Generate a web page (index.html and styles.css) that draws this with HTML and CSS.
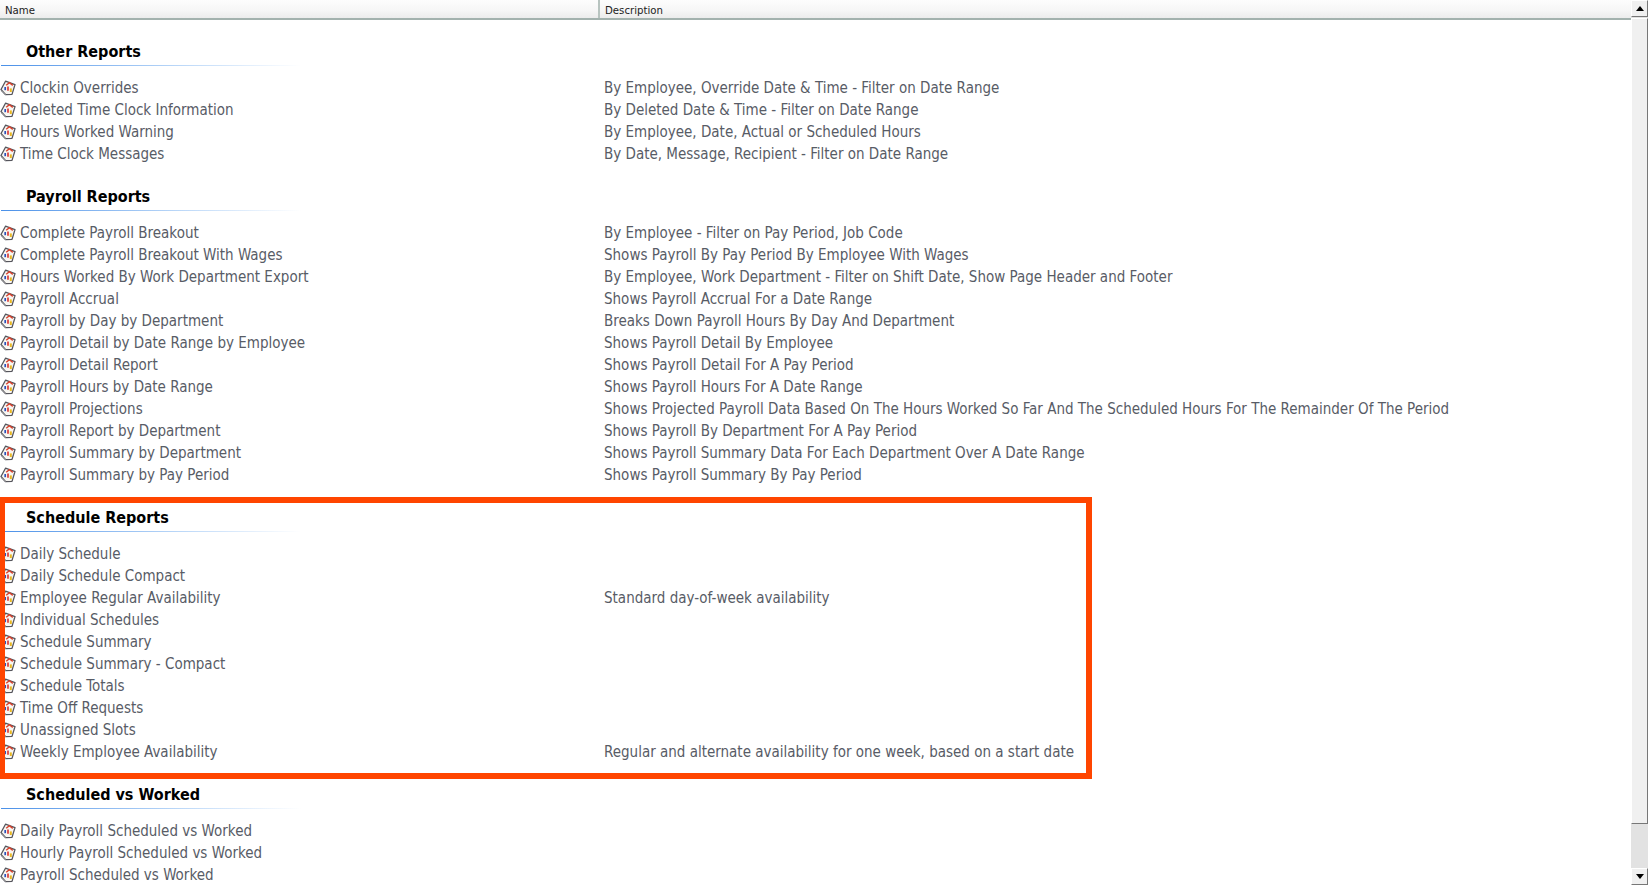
FILE: index.html
```html
<!DOCTYPE html>
<html lang="en">
<head>
<meta charset="utf-8">
<title>Reports</title>
<link rel="stylesheet" href="styles.css">
</head>
<body>
<svg class="defs" width="0" height="0" aria-hidden="true">
  <symbol id="rep" viewBox="0 0 16 17">
    <path d="M1 10.5 5.5 2.2l9.5 3.4-3 9.8-6.4.2Z" fill="#f8f6f2" stroke="#55555c" stroke-width="1.3" stroke-linejoin="round"/>
    <path d="M1.4 11.6 5.6 15.8" stroke="#8e8e92" stroke-width="1.3"/>
    <path d="M6.2 6.2 9.4 3.6l3.4 2.8" fill="none" stroke="#d8402c" stroke-width="1.4"/>
    <path d="M5.2 8v3.2" stroke="#2c50b8" stroke-width="1.7"/>
    <path d="M8 7.4v4.4" stroke="#d8302c" stroke-width="1.6"/>
    <path d="M10.8 9.4v3.6" stroke="#e8b820" stroke-width="2"/>
  </symbol>
</svg>
<div class="window">
  <div class="content">
    <header class="head">
      <div class="head-name">Name</div>
      <div class="head-desc">Description</div>
    </header>
    <main class="list">
      <section class="group">
        <h2 class="group-title">Other Reports</h2>
        <div class="row"><svg class="ico"><use href="#rep"/></svg><span class="name">Clockin Overrides</span><span class="desc">By Employee, Override Date &amp; Time - Filter on Date Range</span></div>
        <div class="row"><svg class="ico"><use href="#rep"/></svg><span class="name">Deleted Time Clock Information</span><span class="desc">By Deleted Date &amp; Time - Filter on Date Range</span></div>
        <div class="row"><svg class="ico"><use href="#rep"/></svg><span class="name">Hours Worked Warning</span><span class="desc">By Employee, Date, Actual or Scheduled Hours</span></div>
        <div class="row"><svg class="ico"><use href="#rep"/></svg><span class="name">Time Clock Messages</span><span class="desc">By Date, Message, Recipient - Filter on Date Range</span></div>
      </section>
      <section class="group">
        <h2 class="group-title">Payroll Reports</h2>
        <div class="row"><svg class="ico"><use href="#rep"/></svg><span class="name">Complete Payroll Breakout</span><span class="desc">By Employee - Filter on Pay Period, Job Code</span></div>
        <div class="row"><svg class="ico"><use href="#rep"/></svg><span class="name">Complete Payroll Breakout With Wages</span><span class="desc">Shows Payroll By Pay Period By Employee With Wages</span></div>
        <div class="row"><svg class="ico"><use href="#rep"/></svg><span class="name">Hours Worked By Work Department Export</span><span class="desc">By Employee, Work Department - Filter on Shift Date, Show Page Header and Footer</span></div>
        <div class="row"><svg class="ico"><use href="#rep"/></svg><span class="name">Payroll Accrual</span><span class="desc">Shows Payroll Accrual For a Date Range</span></div>
        <div class="row"><svg class="ico"><use href="#rep"/></svg><span class="name">Payroll by Day by Department</span><span class="desc">Breaks Down Payroll Hours By Day And Department</span></div>
        <div class="row"><svg class="ico"><use href="#rep"/></svg><span class="name">Payroll Detail by Date Range by Employee</span><span class="desc">Shows Payroll Detail By Employee</span></div>
        <div class="row"><svg class="ico"><use href="#rep"/></svg><span class="name">Payroll Detail Report</span><span class="desc">Shows Payroll Detail For A Pay Period</span></div>
        <div class="row"><svg class="ico"><use href="#rep"/></svg><span class="name">Payroll Hours by Date Range</span><span class="desc">Shows Payroll Hours For A Date Range</span></div>
        <div class="row"><svg class="ico"><use href="#rep"/></svg><span class="name">Payroll Projections</span><span class="desc">Shows Projected Payroll Data Based On The Hours Worked So Far And The Scheduled Hours For The Remainder Of The Period</span></div>
        <div class="row"><svg class="ico"><use href="#rep"/></svg><span class="name">Payroll Report by Department</span><span class="desc">Shows Payroll By Department For A Pay Period</span></div>
        <div class="row"><svg class="ico"><use href="#rep"/></svg><span class="name">Payroll Summary by Department</span><span class="desc">Shows Payroll Summary Data For Each Department Over A Date Range</span></div>
        <div class="row"><svg class="ico"><use href="#rep"/></svg><span class="name">Payroll Summary by Pay Period</span><span class="desc">Shows Payroll Summary By Pay Period</span></div>
      </section>
      <section class="group">
        <h2 class="group-title">Schedule Reports</h2>
        <div class="row"><svg class="ico"><use href="#rep"/></svg><span class="name">Daily Schedule</span><span class="desc"></span></div>
        <div class="row"><svg class="ico"><use href="#rep"/></svg><span class="name">Daily Schedule Compact</span><span class="desc"></span></div>
        <div class="row"><svg class="ico"><use href="#rep"/></svg><span class="name">Employee Regular Availability</span><span class="desc">Standard day-of-week availability</span></div>
        <div class="row"><svg class="ico"><use href="#rep"/></svg><span class="name">Individual Schedules</span><span class="desc"></span></div>
        <div class="row"><svg class="ico"><use href="#rep"/></svg><span class="name">Schedule Summary</span><span class="desc"></span></div>
        <div class="row"><svg class="ico"><use href="#rep"/></svg><span class="name">Schedule Summary - Compact</span><span class="desc"></span></div>
        <div class="row"><svg class="ico"><use href="#rep"/></svg><span class="name">Schedule Totals</span><span class="desc"></span></div>
        <div class="row"><svg class="ico"><use href="#rep"/></svg><span class="name">Time Off Requests</span><span class="desc"></span></div>
        <div class="row"><svg class="ico"><use href="#rep"/></svg><span class="name">Unassigned Slots</span><span class="desc"></span></div>
        <div class="row"><svg class="ico"><use href="#rep"/></svg><span class="name">Weekly Employee Availability</span><span class="desc">Regular and alternate availability for one week, based on a start date</span></div>
      </section>
      <section class="group">
        <h2 class="group-title">Scheduled vs Worked</h2>
        <div class="row"><svg class="ico"><use href="#rep"/></svg><span class="name">Daily Payroll Scheduled vs Worked</span><span class="desc"></span></div>
        <div class="row"><svg class="ico"><use href="#rep"/></svg><span class="name">Hourly Payroll Scheduled vs Worked</span><span class="desc"></span></div>
        <div class="row"><svg class="ico"><use href="#rep"/></svg><span class="name">Payroll Scheduled vs Worked</span><span class="desc"></span></div>
      </section>
    </main>
  </div>
  <aside class="scrollbar">
    <div class="sb-btn"><span class="arrow-up"></span></div>
    <div class="sb-thumb"></div>
    <div class="sb-track"></div>
    <div class="sb-btn"><span class="arrow-down"></span></div>
  </aside>
</div>
<div class="callout"></div>
</body>
</html>
```
FILE: styles.css
```css
* { box-sizing: border-box; }
html, body { margin: 0; height: 100%; overflow: hidden; background: #fff; }
body { font-family: "DejaVu Sans", "Noto Sans", sans-serif; font-stretch: condensed; position: relative; }
.defs { position: absolute; }
.window { display: flex; height: 885px; }
.content { flex: 1; min-width: 0; display: flex; flex-direction: column; overflow: hidden; }
.head {
  display: flex; height: 20px; flex: none;
  background: linear-gradient(#fdfdfd, #f6f6f6 60%, #ececec);
  border-bottom: 2px solid #a3b2ae;
  font-size: 11.3px; line-height: 21px; color: #222;
}
.head-name { width: 600px; padding-left: 5px; border-right: 2px solid #b8c4c0; }
.head-desc { padding-left: 5px; }
.list { flex: 1; overflow: hidden; }
.group { padding-top: 20px; }
.group-title {
  margin: 0 0 11px; height: 26px; padding-left: 26px;
  font-size: 16px; line-height: 23px; font-weight: 700; color: #000;
  background: linear-gradient(90deg, #4a90e8, #bcd8f8 60%, #fff 100%) no-repeat 1px 25px / 300px 1px;
}
.row { display: flex; align-items: center; height: 22px; font-size: 15px; color: #585c66; }
.ico { width: 16px; height: 17px; flex: none; margin: 0 4px 2px 0; }
.name { width: 584px; white-space: nowrap; }
.desc { white-space: nowrap; }
.scrollbar { width: 17px; flex: none; display: flex; flex-direction: column; background: #e2e2e2; }
.sb-btn {
  height: 17px; flex: none; display: flex; align-items: center; justify-content: center;
  background: #f0f0f0; border-right: 1px solid #777; border-bottom: 1px solid #777;
  border-left: 1px solid #fff; border-top: 1px solid #fff;
}
.arrow-up { border: 4px solid transparent; border-top: 0; border-bottom: 5px solid #000; width: 0; }
.arrow-down { border: 4px solid transparent; border-bottom: 0; border-top: 5px solid #000; width: 0; }
.sb-thumb {
  height: 806px; flex: none; background: #f0f0f0; margin-top: 1px;
  border-right: 1px solid #777; border-bottom: 1px solid #777;
  border-left: 1px solid #fff; border-top: 1px solid #fff;
}
.sb-track { flex: 1; }
.callout {
  position: absolute; left: 0; top: 497px; width: 1092px; height: 282px;
  border: 6px solid #ff4500; border-left-width: 5px; pointer-events: none;
}
```
